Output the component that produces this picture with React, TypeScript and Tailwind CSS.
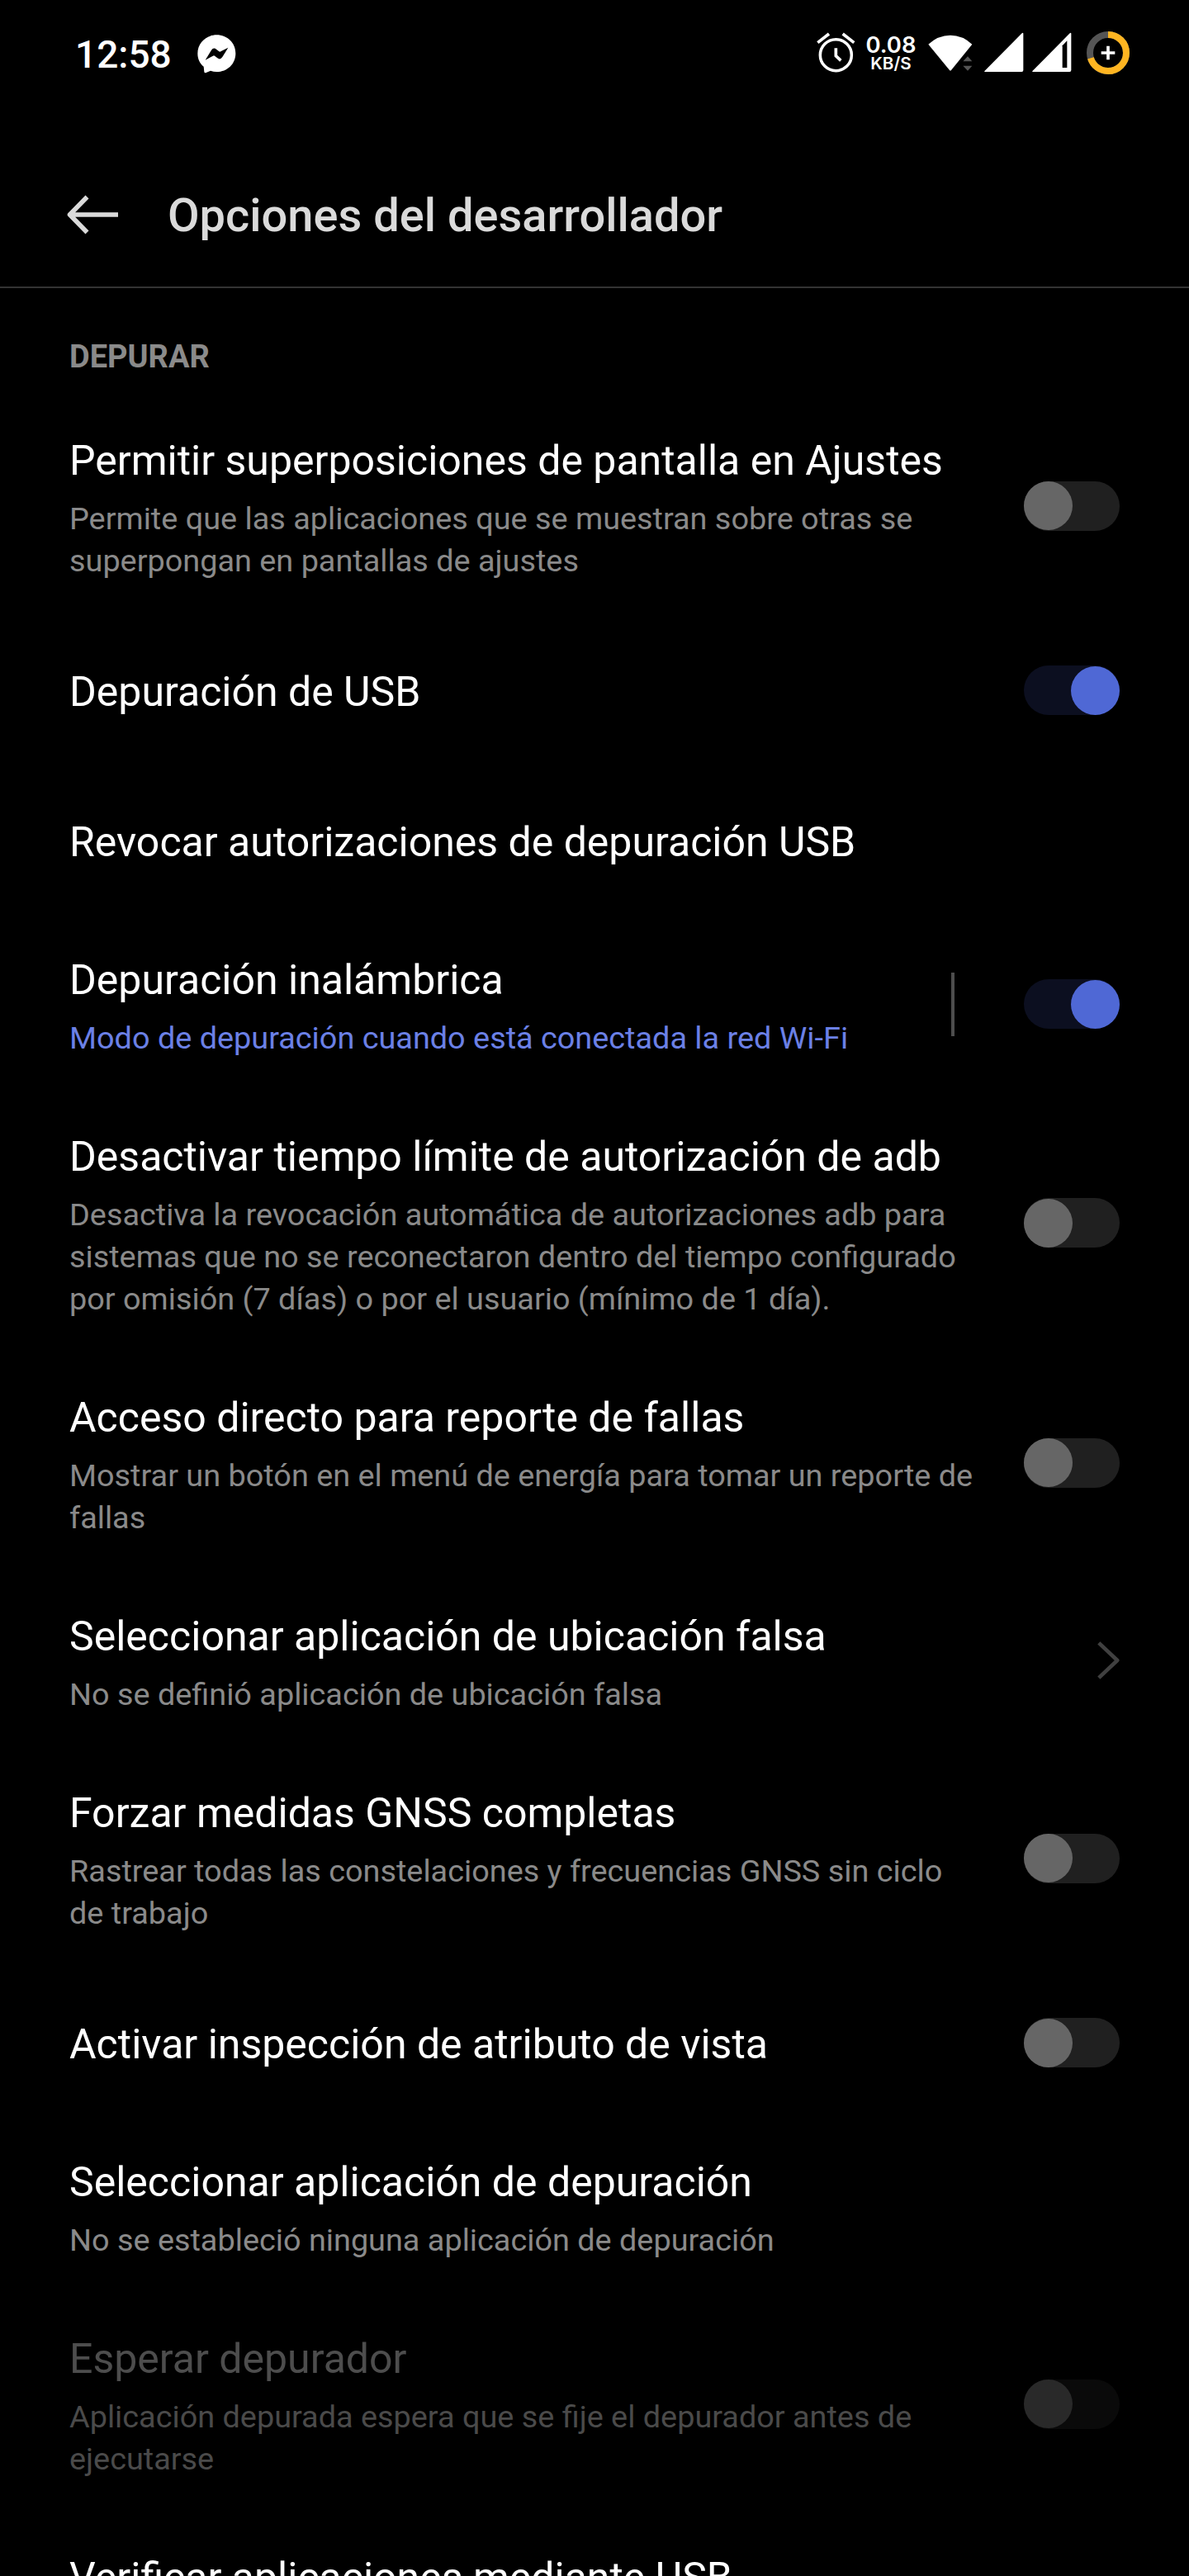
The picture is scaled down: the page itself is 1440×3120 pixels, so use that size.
import React from "react";

type Control = "on" | "off" | "chevron" | "none";

interface Setting {
  title: string;
  summary?: string;
  control: Control;
  split?: boolean;
  accent?: boolean;
  disabled?: boolean;
}

const settings: Setting[] = [
  {
    title: "Permitir superposiciones de pantalla en Ajustes",
    summary: "Permite que las aplicaciones que se muestran sobre otras se superpongan en pantallas de ajustes",
    control: "off",
  },
  { title: "Depuración de USB", control: "on" },
  { title: "Revocar autorizaciones de depuración USB", control: "none" },
  {
    title: "Depuración inalámbrica",
    summary: "Modo de depuración cuando está conectada la red Wi-Fi",
    control: "on",
    split: true,
    accent: true,
  },
  {
    title: "Desactivar tiempo límite de autorización de adb",
    summary:
      "Desactiva la revocación automática de autorizaciones adb para sistemas que no se reconectaron dentro del tiempo configurado por omisión (7 días) o por el usuario (mínimo de 1 día).",
    control: "off",
  },
  {
    title: "Acceso directo para reporte de fallas",
    summary: "Mostrar un botón en el menú de energía para tomar un reporte de fallas",
    control: "off",
  },
  {
    title: "Seleccionar aplicación de ubicación falsa",
    summary: "No se definió aplicación de ubicación falsa",
    control: "chevron",
  },
  {
    title: "Forzar medidas GNSS completas",
    summary: "Rastrear todas las constelaciones y frecuencias GNSS sin ciclo de trabajo",
    control: "off",
  },
  { title: "Activar inspección de atributo de vista", control: "off" },
  {
    title: "Seleccionar aplicación de depuración",
    summary: "No se estableció ninguna aplicación de depuración",
    control: "none",
  },
  {
    title: "Esperar depurador",
    summary: "Aplicación depurada espera que se fije el depurador antes de ejecutarse",
    control: "off",
    disabled: true,
  },
  { title: "Verificar aplicaciones mediante USB", control: "none" },
];

function Toggle({ on, disabled }: { on: boolean; disabled?: boolean }) {
  const track = on ? "justify-end bg-[#0c0f20]" : disabled ? "justify-start bg-[#0a0a0a]" : "justify-start bg-[#202020]";
  const thumb = on ? "bg-[#4f68d5]" : disabled ? "bg-[#292929]" : "bg-[#666666]";
  return (
    <div role="switch" aria-checked={on} className={`flex h-[60px] w-[116px] shrink-0 items-center rounded-full ${track}`}>
      <div className={`h-[59px] w-[59px] rounded-full ${thumb}`} />
    </div>
  );
}

function Chevron() {
  return (
    <svg width="27" height="46" viewBox="0 0 27 46" fill="none" stroke="#404040" strokeWidth="4.6" strokeLinejoin="round">
      <path d="M1.8 1.8 L24.2 23 L1.8 44.2" />
    </svg>
  );
}

function Row({ s, last }: { s: Setting; last?: boolean }) {
  const titleColor = s.disabled ? "text-[#4d4d4d]" : "text-white";
  const summaryColor = s.accent ? "text-[#6b80e6]" : s.disabled ? "text-[#4a4a4a]" : "text-[#8a8a8a]";
  const tall = s.summary || last;
  return (
    <div className={`flex shrink-0 items-center justify-between px-[84px] ${tall ? "" : "h-[182px]"}`}>
      <div className={tall ? "w-[1104px] shrink-0 pt-12 pb-[40.5px]" : "pt-1"}>
        <p className={`text-[50px] leading-[60px] whitespace-nowrap ${titleColor}`}>{s.title}</p>
        {s.summary && <p className={`mt-[14.5px] text-[37.85px] leading-[51px] ${summaryColor}`}>{s.summary}</p>}
      </div>
      <div className="flex shrink-0 items-center">
        {s.split && <div className="mr-[84px] -ml-[50px] h-[77px] w-1 bg-[#4d4d4d]" />}
        {s.control === "chevron" && <Chevron />}
        {(s.control === "on" || s.control === "off") && <Toggle on={s.control === "on"} disabled={s.disabled} />}
      </div>
    </div>
  );
}

function MessengerIcon() {
  return (
    <svg width="47" height="47" viewBox="538 65 141 141">
      <path fill="#fff" d="M608 66 C570 66 539 95 539 133 C539 153 547 169 561 181 L563 200 Q564 206 570 203 L586 196 Q597 200 608 200 C647 200 677 171 677 133 C677 95 647 66 608 66 Z" />
      <path fill="#000" d="M567 157 L589 121 Q597 110 607 118 L617 126 Q620 128 623 126 L650 112 L629 146 Q621 158 611 150 L601 142 Q598 140 595 142 Z" />
    </svg>
  );
}

function AlarmIcon() {
  return (
    <svg width="47" height="49" viewBox="56 58 141 147" fill="none" stroke="#fff">
      <circle cx="126" cy="141" r="57" strokeWidth="10.5" />
      <path d="M60 96 L101 64 M151 64 L192 96" strokeWidth="11" />
      <path d="M126 116 V144 L144 161" strokeWidth="11" />
    </svg>
  );
}

function WifiIcon() {
  return (
    <svg width="54" height="45" viewBox="461 65 162 135">
      <path fill="#fff" d="M462 100 Q498 67 542 67 Q586 67 621 100 L545 194 Q542 197 539 194 Z" />
      <path fill="#555" d="M588 162 L605 144 L621 162 Z M588 178 H621 L605 196 Z" />
    </svg>
  );
}

function SignalIcon({ partial }: { partial?: boolean }) {
  return (
    <svg width="48" height="49" viewBox="666 58 144 147">
      <path fill="#fff" d="M669 202 Q664 202 668 198 L803 62 Q808 58 808 64 V196 Q808 202 802 202 Z" />
      {partial && <path fill="#000" d="M776 107 L793 89 V187 H776 Z" />}
    </svg>
  );
}

function BatteryIcon() {
  return (
    <svg width="52" height="52" viewBox="0 0 156 156" fill="none">
      <circle cx="78" cy="78" r="66" stroke="#555" strokeWidth="24" />
      <circle cx="78" cy="78" r="66" stroke="#ffb521" strokeWidth="24" pathLength="100" strokeDasharray="70 30" transform="rotate(-90 78 78)" />
      <path d="M78 53 V103 M53 78 H103" stroke="#fff" strokeWidth="11" />
    </svg>
  );
}

function StatusBar() {
  return (
    <div className="flex h-32 shrink-0 items-start justify-between pr-[72px] pl-[91px]">
      <div className="flex items-start">
        <span className="mt-10 w-[148px] text-[46px] leading-[52px] font-medium text-white">12:58</span>
        <div className="mt-[42px]"><MessengerIcon /></div>
      </div>
      <div className="flex items-start">
        <div className="mt-[39px]"><AlarmIcon /></div>
        <div className="mt-10 mr-[14px] ml-3 flex w-[62px] flex-col items-center font-['Inter'] font-semibold text-white">
          <span className="text-[27.4px] leading-7">0.08</span>
          <span className="text-[20.6px] leading-[18px]">KB/S</span>
        </div>
        <div className="mt-[42px] mr-[14px]"><WifiIcon /></div>
        <div className="mt-[39px] mr-[10px]"><SignalIcon /></div>
        <div className="mt-[39px] mr-[18px]"><SignalIcon partial /></div>
        <div className="mt-[38px]"><BatteryIcon /></div>
      </div>
    </div>
  );
}

export default function App() {
  return (
    <div className="flex h-[3120px] w-[1440px] flex-col overflow-hidden bg-black font-['Roboto',sans-serif]">
      <StatusBar />
      <header className="flex h-[221px] shrink-0 items-start border-b-2 border-[#333333] pl-[81px]">
        <svg className="mt-[108px]" width="62" height="48" viewBox="0 0 62 48" fill="none" stroke="#dadada" strokeWidth="5.6">
          <path d="M24.5 2.5 L3.5 24 L24.5 45.5 M3.5 24 H62" strokeLinejoin="round" />
        </svg>
        <h1 className="mt-[101px] ml-[60px] text-[56px] leading-[64px] font-medium whitespace-nowrap text-[#dadada]">
          Opciones del desarrollador
        </h1>
      </header>
      <h2 className="h-[131px] shrink-0 px-[84px] pt-[59px] text-[38px] leading-[48px] font-bold text-[#8a8a8a]">DEPURAR</h2>
      <main className="flex flex-col">
        {settings.map((s, i) => (
          <Row key={s.title} s={s} last={i === settings.length - 1} />
        ))}
      </main>
    </div>
  );
}
